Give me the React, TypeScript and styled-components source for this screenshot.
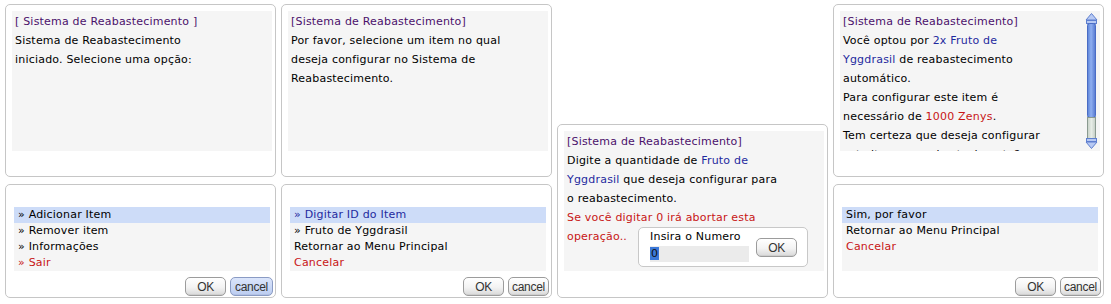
import styled, { createGlobalStyle } from 'styled-components'

const GlobalStyle = createGlobalStyle`
  html, body {
    margin: 0;
    padding: 0;
    background: #ffffff;
  }
  body {
    font-family: 'DejaVu Sans', Verdana, sans-serif;
    font-size: 11px;
    letter-spacing: 0.2px;
    color: #000;
  }
`

const Page = styled.div`
  display: grid;
  grid-template-columns: repeat(4, 271px);
  column-gap: 5px;
  padding: 4px 0 0 5px;
  width: 1111px;
  height: 304px;
  box-sizing: border-box;
  overflow: hidden;
`

const Column = styled.div<{ $end?: boolean }>`
  display: flex;
  flex-direction: column;
  justify-content: ${p => (p.$end ? 'flex-end' : 'flex-start')};
  gap: 7px;
  height: 294px;
`

const Frame = styled.div`
  border: 1px solid #c6c6c6;
  border-radius: 5px;
  background: #fff;
  box-sizing: border-box;
`

const DialogPanel = styled(Frame)<{ $tall?: boolean }>`
  height: ${p => (p.$tall ? 174 : 173)}px;
  padding: 6px 3px 0 6px;
`

const DialogBody = styled.div`
  display: flex;
  height: 140px;
  background: #f5f5f5;
  overflow: hidden;
`

const DialogText = styled.div`
  flex: 1;
  padding: 1px 3px;
  line-height: 19px;
  white-space: nowrap;
`

const Line = styled.div`
  height: 19px;
`

const Title = styled(Line)`
  color: #4b116b;
`

const Blue = styled.span`
  color: #1f2a9e;
`

const Red = styled.span`
  color: #c81616;
`

const MenuPanel = styled(Frame)`
  height: 114px;
  padding: 22px 5px 0 8px;
  display: flex;
  flex-direction: column;
`

const MenuList = styled.div`
  height: 64px;
  background: #f5f5f5;
`

const MenuRow = styled.div<{ $active?: boolean; $tone?: 'red' | 'blue' }>`
  height: 16px;
  line-height: 16px;
  padding-left: 4px;
  white-space: nowrap;
  background: ${p => (p.$active ? '#cddcf8' : 'transparent')};
  color: ${p => (p.$tone === 'red' ? '#c81616' : p.$tone === 'blue' ? '#1f2a9e' : '#000')};
`

const Buttons = styled.div`
  display: flex;
  justify-content: flex-end;
  gap: 4px;
  margin-top: 6px;
  margin-right: -3px;
`

const Button = styled.button<{ $on?: boolean; $w?: number }>`
  width: ${p => p.$w ?? 41}px;
  height: 19px;
  padding: 0;
  border: 1px solid ${p => (p.$on ? '#8a9bc4' : '#9c9c9c')};
  border-radius: 5px;
  background: ${p =>
    p.$on
      ? 'linear-gradient(#dbe5fb, #bccdf1)'
      : 'linear-gradient(#ffffff 0%, #f3f3f3 55%, #d9d9d9 100%)'};
  box-shadow: inset 0 -1px 0 rgba(0, 0, 0, 0.05);
  font-family: 'Liberation Sans', Arial, sans-serif;
  font-size: 12px;
  letter-spacing: -0.3px;
  color: #333;
  line-height: 16px;
`

const LastLine = styled.div`
  display: flex;
  align-items: flex-start;
`

const InputBox = styled.div`
  display: flex;
  align-items: flex-start;
  margin-left: 11px;
  width: 170px;
  height: 40px;
  box-sizing: border-box;
  border: 1px solid #c8c8c8;
  border-radius: 5px;
  background: #fff;
  padding: 0 0 0 11px;
`

const InputGroup = styled.div`
  display: flex;
  flex-direction: column;
  width: 99px;
`

const InputLabel = styled.div`
  color: #000;
  line-height: 18px;
`

const Field = styled.div`
  height: 16px;
  background: #ebebeb;
  line-height: 16px;
`

const Selected = styled.span`
  background: #3b78d8;
  color: #111;
  padding: 0 1px;
`

const InputOk = styled(Button)`
  margin: 10px 0 0 7px;
`

const Scroll = styled.svg`
  flex: none;
  margin: 2px 2px 0 0;
`

function ScrollBar() {
  return (
    <Scroll width="13" height="137" viewBox="0 0 13 137">
      <defs>
        <linearGradient id="thumb" x1="0" x2="1">
          <stop offset="0" stopColor="#5a82d8" />
          <stop offset="0.45" stopColor="#8eaef0" />
          <stop offset="1" stopColor="#5477cf" />
        </linearGradient>
        <linearGradient id="track" x1="0" x2="1">
          <stop offset="0" stopColor="#c6d0c6" />
          <stop offset="0.5" stopColor="#e6ece6" />
          <stop offset="1" stopColor="#c2ccc4" />
        </linearGradient>
      </defs>
      <path d="M6.5 0.5 L12 7 L1 7 Z" fill="#b7c9f3" stroke="#5e7fcf" strokeWidth="1" />
      <rect x="1.5" y="7.5" width="10" height="3" fill="#b7c9f3" stroke="#5e7fcf" />
      <rect x="2.5" y="10.5" width="8" height="94" rx="2" fill="url(#thumb)" stroke="#4a6cc4" />
      <rect x="2.5" y="104.5" width="8" height="21" fill="url(#track)" stroke="#8a9a90" />
      <rect x="1.5" y="125.5" width="10" height="3" fill="#b7c9f3" stroke="#5e7fcf" />
      <path d="M1 129 L12 129 L6.5 135.5 Z" fill="#b7c9f3" stroke="#5e7fcf" strokeWidth="1" />
    </Scroll>
  )
}

export default function App() {
  return (
    <>
      <GlobalStyle />
      <Page>
        <Column>
          <DialogPanel>
            <DialogBody>
              <DialogText>
                <Title>[ Sistema de Reabastecimento ]</Title>
                <Line>Sistema de Reabastecimento</Line>
                <Line>iniciado. Selecione uma opção:</Line>
              </DialogText>
            </DialogBody>
          </DialogPanel>
          <MenuPanel>
            <MenuList>
              <MenuRow $active>» Adicionar Item</MenuRow>
              <MenuRow>» Remover item</MenuRow>
              <MenuRow>» Informações</MenuRow>
              <MenuRow $tone="red">» Sair</MenuRow>
            </MenuList>
            <Buttons>
              <Button>OK</Button>
              <Button $on $w={43}>cancel</Button>
            </Buttons>
          </MenuPanel>
        </Column>

        <Column>
          <DialogPanel>
            <DialogBody>
              <DialogText>
                <Title>[Sistema de Reabastecimento]</Title>
                <Line>Por favor, selecione um item no qual</Line>
                <Line>deseja configurar no Sistema de</Line>
                <Line>Reabastecimento.</Line>
              </DialogText>
            </DialogBody>
          </DialogPanel>
          <MenuPanel>
            <MenuList>
              <MenuRow $active $tone="blue">» Digitar ID do Item</MenuRow>
              <MenuRow>» Fruto de Yggdrasil</MenuRow>
              <MenuRow>Retornar ao Menu Principal</MenuRow>
              <MenuRow $tone="red">Cancelar</MenuRow>
            </MenuList>
            <Buttons>
              <Button>OK</Button>
              <Button $w={41}>cancel</Button>
            </Buttons>
          </MenuPanel>
        </Column>

        <Column $end>
          <DialogPanel $tall>
            <DialogBody>
              <DialogText>
                <Title>[Sistema de Reabastecimento]</Title>
                <Line>
                  Digite a quantidade de <Blue>Fruto de</Blue>
                </Line>
                <Line>
                  <Blue>Yggdrasil</Blue> que deseja configurar para
                </Line>
                <Line>o reabastecimento.</Line>
                <Line>
                  <Red>Se você digitar 0 irá abortar esta</Red>
                </Line>
                <LastLine>
                  <Red>operação..</Red>
                  <InputBox>
                    <InputGroup>
                      <InputLabel>Insira o Numero</InputLabel>
                      <Field>
                        <Selected>0</Selected>
                      </Field>
                    </InputGroup>
                    <InputOk>OK</InputOk>
                  </InputBox>
                </LastLine>
              </DialogText>
            </DialogBody>
          </DialogPanel>
        </Column>

        <Column>
          <DialogPanel>
            <DialogBody>
              <DialogText>
                <Title>[Sistema de Reabastecimento]</Title>
                <Line>
                  Você optou por <Blue>2x Fruto de</Blue>
                </Line>
                <Line>
                  <Blue>Yggdrasil</Blue> de reabastecimento
                </Line>
                <Line>automático.</Line>
                <Line>Para configurar este item é</Line>
                <Line>
                  necessário de <Red>1000 Zenys</Red>.
                </Line>
                <Line>Tem certeza que deseja configurar</Line>
                <Line>este item no reabastecimento?</Line>
              </DialogText>
              <ScrollBar />
            </DialogBody>
          </DialogPanel>
          <MenuPanel>
            <MenuList>
              <MenuRow $active>Sim, por favor</MenuRow>
              <MenuRow>Retornar ao Menu Principal</MenuRow>
              <MenuRow $tone="red">Cancelar</MenuRow>
            </MenuList>
            <Buttons>
              <Button>OK</Button>
              <Button $w={41}>cancel</Button>
            </Buttons>
          </MenuPanel>
        </Column>
      </Page>
    </>
  )
}
